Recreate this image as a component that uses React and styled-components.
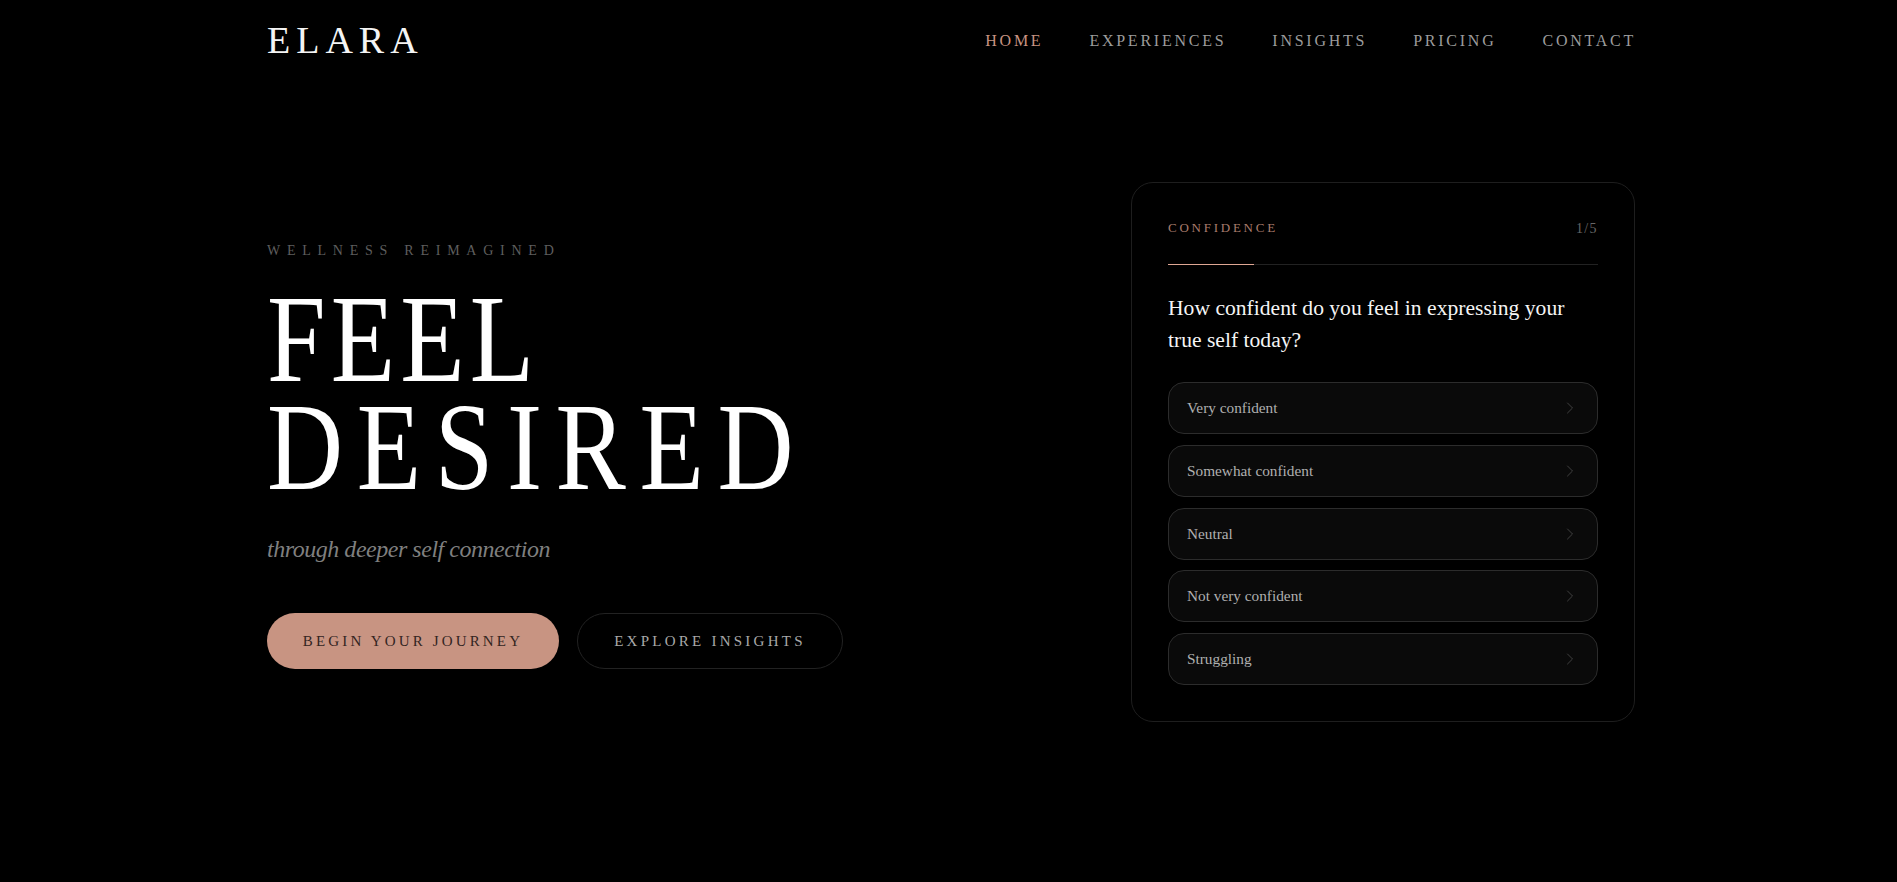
import React from "react";
import styled, { createGlobalStyle } from "styled-components";
import { ChevronRight } from "lucide-react";

const serif = `"Liberation Serif", "Times New Roman", serif`;
const rose = "#c89482";

const options = ["Very confident", "Somewhat confident", "Neutral", "Not very confident", "Struggling"];
const links = ["Home", "Experiences", "Insights", "Pricing", "Contact"];

const GlobalStyle = createGlobalStyle`
    html, body {
        margin: 0;
        background: #000;
        font-family: ${serif};
    }
    * {
        box-sizing: border-box;
    }
`;

const App = () => {
    return (
        <Page>
            <GlobalStyle />
            <Header>
                <Logo>ELARA</Logo>
                <Nav>
                    {links.map((link, i) => (
                        <NavLink key={link} $active={i === 0}>
                            {link}
                        </NavLink>
                    ))}
                </Nav>
            </Header>
            <Main>
                <Intro>
                    <Eyebrow>Wellness Reimagined</Eyebrow>
                    <Title>
                        <TitleLine $spacing={6}>FEEL</TitleLine>
                        <TitleLine $spacing={16}>DESIRED</TitleLine>
                    </Title>
                    <Subtitle>through deeper self connection</Subtitle>
                    <Actions>
                        <PrimaryButton>Begin Your Journey</PrimaryButton>
                        <GhostButton>Explore Insights</GhostButton>
                    </Actions>
                </Intro>
                <Card>
                    <CardTop>
                        <Category>Confidence</Category>
                        <Step>1/5</Step>
                    </CardTop>
                    <Progress>
                        <ProgressFill />
                    </Progress>
                    <Question>How confident do you feel in expressing your true self today?</Question>
                    <OptionList>
                        {options.map((option) => (
                            <Option key={option}>
                                {option}
                                <ChevronRight size={20} strokeWidth={1} />
                            </Option>
                        ))}
                    </OptionList>
                </Card>
            </Main>
        </Page>
    );
};

export default App;

const Page = styled.div`
    width: 1897px;
    height: 882px;
    padding: 0 262px 0 267px;
    background: #000;
    overflow: hidden;
`;

const Header = styled.header`
    height: 80px;
    display: flex;
    align-items: center;
    justify-content: space-between;
`;

const Logo = styled.div`
    font-size: 38px;
    letter-spacing: 6px;
    color: #f4f4f4;
`;

const Nav = styled.nav`
    display: flex;
    gap: 46px;
    margin-right: -1px;
    padding-top: 1px;
`;

const NavLink = styled.a`
    font-size: 16px;
    letter-spacing: 2.75px;
    text-transform: uppercase;
    color: ${(p) => (p.$active ? rose : "#9c9c9c")};
`;

const Main = styled.main`
    display: flex;
    justify-content: space-between;
    align-items: flex-start;
    padding-top: 102px;
`;

const Intro = styled.section`
    padding-top: 59px;
`;

const Eyebrow = styled.div`
    font-size: 14px;
    line-height: 20px;
    letter-spacing: 6.75px;
    text-transform: uppercase;
    color: #5e5e5e;
`;

const Title = styled.h1`
    margin: 25px 0 27px;
    font-size: 124px;
    line-height: 108px;
    font-weight: 400;
    color: #fff;
`;

const TitleLine = styled.span`
    display: block;
    white-space: nowrap;
    letter-spacing: ${(p) => p.$spacing}px;
    transform: scaleX(0.85);
    transform-origin: left center;
`;

const Subtitle = styled.p`
    margin: 0 0 44px;
    font-size: 24px;
    line-height: 40px;
    letter-spacing: -0.47px;
    font-style: italic;
    color: #7f7f7f;
`;

const Actions = styled.div`
    display: flex;
    gap: 18px;
`;

const PrimaryButton = styled.button`
    width: 292px;
    height: 56px;
    padding: 0;
    border: 0;
    border-radius: 28px;
    background: ${rose};
    color: #33241f;
    font-family: ${serif};
    font-size: 15px;
    letter-spacing: 3.15px;
    text-transform: uppercase;
`;

const GhostButton = styled(PrimaryButton)`
    width: 266px;
    border: 1px solid #222;
    background: transparent;
    color: #a9a9a9;
    letter-spacing: 3.25px;
`;

const Card = styled.section`
    width: 504px;
    height: 540px;
    padding: 36px;
    border: 1px solid #1e1e1e;
    border-radius: 22px;
`;

const CardTop = styled.div`
    height: 20px;
    display: flex;
    align-items: center;
    justify-content: space-between;
`;

const Category = styled.span`
    font-size: 13px;
    letter-spacing: 2.75px;
    text-transform: uppercase;
    color: #a97c6d;
    margin-top: -2px;
`;

const Step = styled.span`
    font-size: 14px;
    letter-spacing: 1.4px;
    color: #666;
`;

const Progress = styled.div`
    height: 1px;
    margin-top: 25px;
    background: #222;
`;

const ProgressFill = styled.div`
    width: 20%;
    height: 100%;
    background: #dfa794;
`;

const Question = styled.h2`
    margin: 27px 0 0;
    font-size: 21.6px;
    line-height: 32px;
    font-weight: 400;
    color: #f5f5f5;
`;

const OptionList = styled.div`
    display: flex;
    flex-direction: column;
    gap: 10.75px;
    margin-top: 26px;
`;

const Option = styled.div`
    height: 52px;
    padding: 0 17px 0 18px;
    display: flex;
    align-items: center;
    justify-content: space-between;
    border: 1px solid #2c2c2c;
    border-radius: 16px;
    background: #0a0a0a;
    font-size: 15.3px;
    color: #b0b0b0;

    svg {
        color: #4a4a4a;
    }
`;
